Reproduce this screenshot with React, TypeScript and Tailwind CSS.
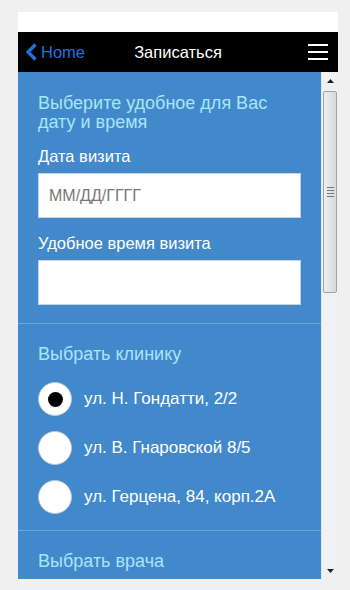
import React from "react";

const font = { fontFamily: '"Liberation Sans", Arial, sans-serif' };

const clinics = [
  { name: "ул. Н. Гондатти, 2/2", checked: true },
  { name: "ул. В. Гнаровской 8/5", checked: false },
  { name: "ул. Герцена, 84, корп.2А", checked: false },
];

function Header() {
  return (
    <div className="relative flex h-[40px] items-center bg-black">
      <div className="flex items-center pl-[7px]">
        <svg width="13" height="18" viewBox="0 0 13 18" className="mr-[3px]">
          <path d="M10.5 1.5 L3 9 L10.5 16.5" fill="none" stroke="#1f72dc" strokeWidth="3.2" />
        </svg>
        <span className="text-[16.5px] text-[#1f72dc]">Home</span>
      </div>
      <span className="pointer-events-none absolute left-0 right-0 text-center text-[16.5px] text-white">
        Записаться
      </span>
      <div className="ml-auto mr-[10px] flex w-[20px] flex-col gap-[5px]">
        <span className="block h-[2px] bg-white" />
        <span className="block h-[2px] bg-white" />
        <span className="block h-[2px] bg-white" />
      </div>
    </div>
  );
}

function Field({ label, placeholder }: { label: string; placeholder?: string }) {
  return (
    <>
      <div className="text-[16.5px] leading-[20px] text-white">{label}</div>
      <input
        readOnly
        placeholder={placeholder}
        className="mt-[7px] h-[45px] w-full border border-[#c9d3dc] bg-white px-[10px] text-[16px] text-[#333] outline-none placeholder:text-[#777]"
        style={font}
      />
    </>
  );
}

function Radio({ name, checked }: { name: string; checked: boolean }) {
  return (
    <div className="flex h-[34px] items-center">
      <span className="flex size-[34px] items-center justify-center rounded-full border border-[#b9c6d2] bg-white">
        {checked && <span className="size-[15px] rounded-full bg-black" />}
      </span>
      <span className="ml-[12px] text-[17px] text-white">{name}</span>
    </div>
  );
}

function Scrollbar() {
  return (
    <div className="flex w-[17px] flex-col border-l border-[#e6e6e6] bg-[#f1f1f1]">
      <div className="flex h-[17px] items-center justify-center">
        <svg width="7" height="4" viewBox="0 0 7 4">
          <path d="M0 4 L3.5 0 L7 4 Z" fill="#222" />
        </svg>
      </div>
      <div className="mx-[1px] mt-[2px] flex h-[202px] flex-col items-center justify-center gap-[2px] rounded-[2px] border border-[#a3a3a3] bg-[linear-gradient(to_right,#eeeeee,#d9d9d9)]">
        <span className="block h-px w-[7px] bg-[#777]" />
        <span className="block h-px w-[7px] bg-[#777]" />
        <span className="block h-px w-[7px] bg-[#777]" />
        <span className="block h-px w-[7px] bg-[#777]" />
      </div>
      <div className="mt-auto flex h-[17px] items-center justify-center">
        <svg width="7" height="4" viewBox="0 0 7 4">
          <path d="M0 0 L3.5 4 L7 0 Z" fill="#222" />
        </svg>
      </div>
    </div>
  );
}

export default function App() {
  return (
    <div className="h-[590px] w-[350px] overflow-hidden bg-[#f0f0f0] pt-[12px]" style={font}>
      <div className="ml-[18px] w-[320px]">
        <div className="h-[20px] bg-white" />
        <Header />
        <div className="flex h-[507px]">
          <div className="w-[303px] overflow-hidden bg-[#4289cb]">
            <section className="px-5 pb-[18px] pt-[22px]">
              <h2 className="text-[18px] leading-[19px] text-[#a6e6f7]">
                Выберите удобное для Вас
                <br />
                дату и время
              </h2>
              <div className="mt-[14px]">
                <Field label="Дата визита" placeholder="ММ/ДД/ГГГГ" />
              </div>
              <div className="mt-[15px]">
                <Field label="Удобное время визита" />
              </div>
            </section>
            <div className="h-px bg-[#64a6e0]" />
            <section className="px-5 pb-[16px] pt-[21px]">
              <h2 className="text-[18px] leading-[19px] text-[#a6e6f7]">Выбрать клинику</h2>
              <div className="mt-[18px] flex flex-col gap-[15px]">
                {clinics.map((c) => (
                  <Radio key={c.name} name={c.name} checked={c.checked} />
                ))}
              </div>
            </section>
            <div className="h-px bg-[#64a6e0]" />
            <section className="px-5 pt-[21px]">
              <h2 className="text-[18px] leading-[19px] text-[#a6e6f7]">Выбрать врача</h2>
            </section>
          </div>
          <Scrollbar />
        </div>
      </div>
    </div>
  );
}
